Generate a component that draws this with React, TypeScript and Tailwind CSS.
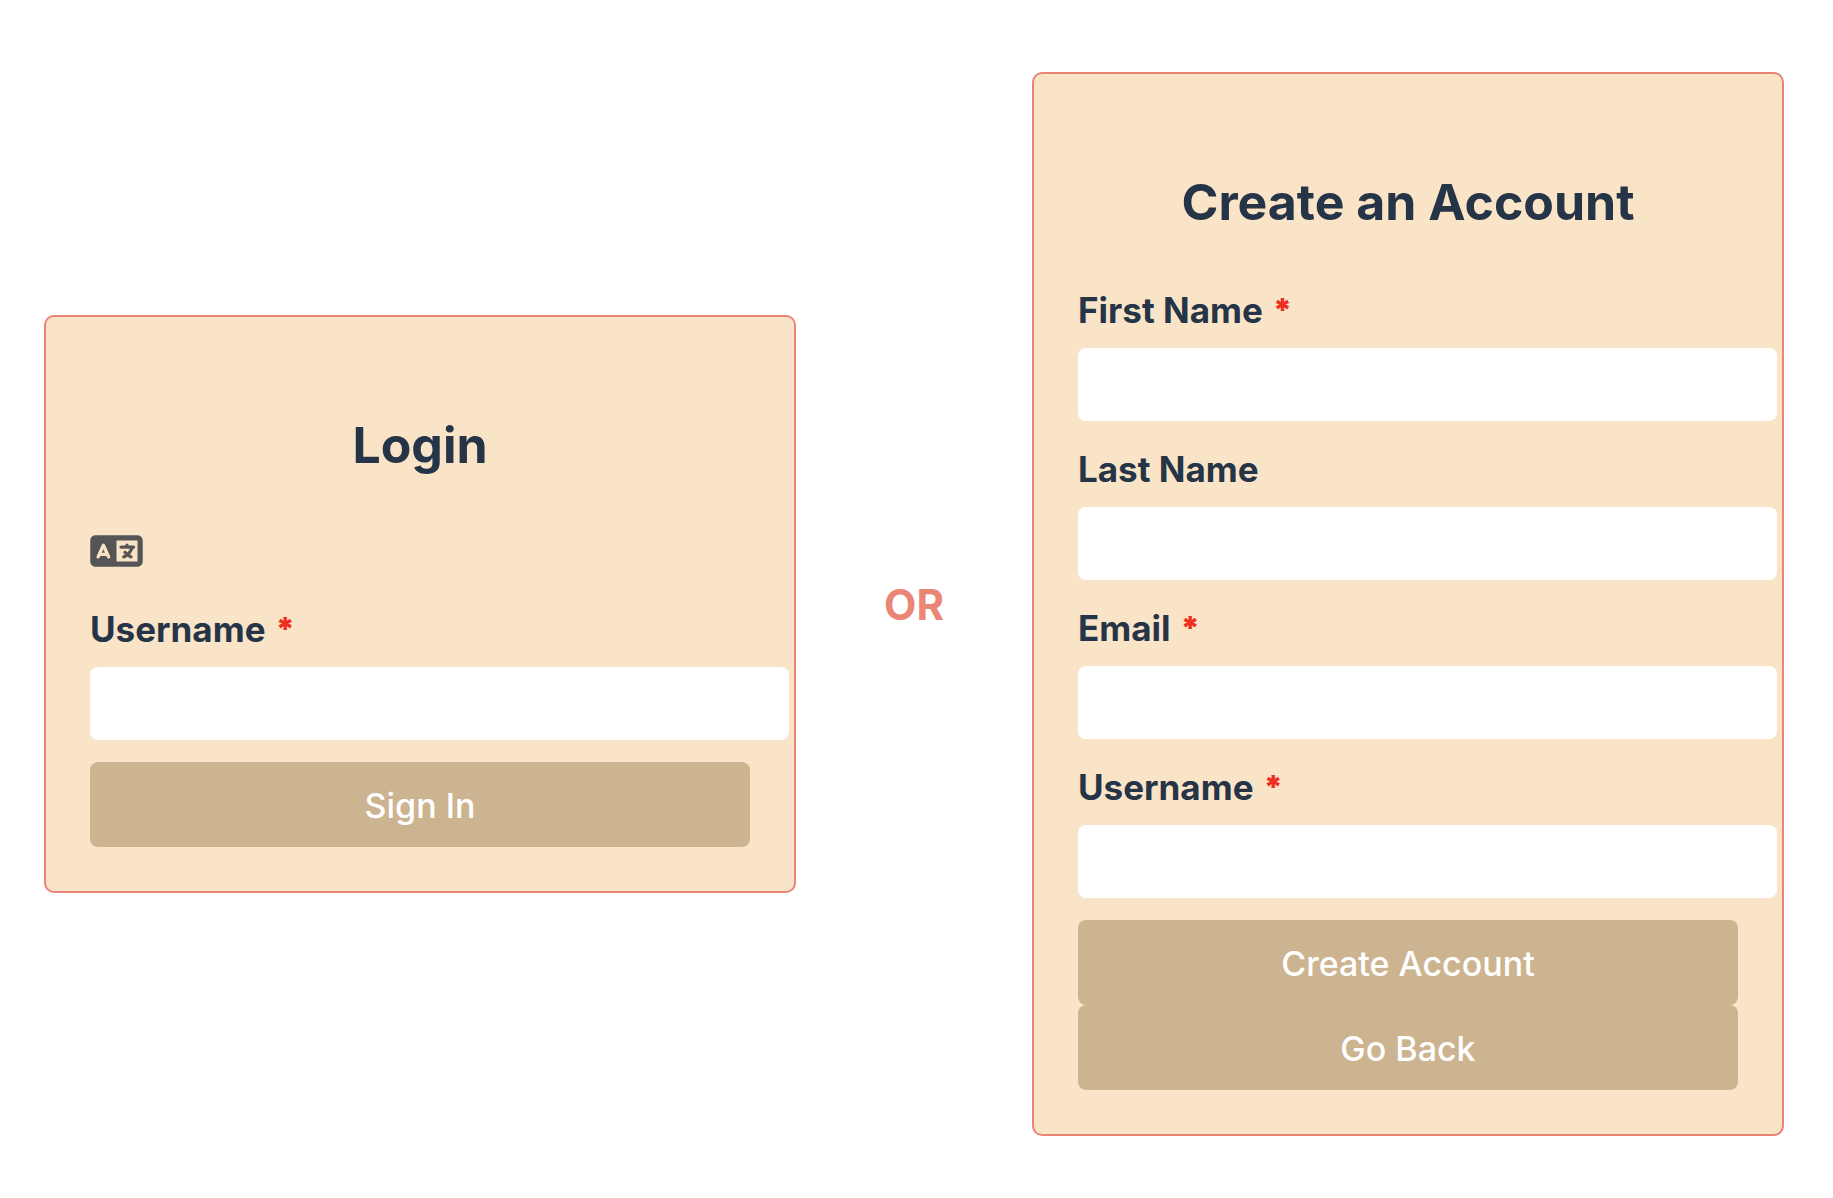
import type { ReactNode } from "react";
import { FaLanguage } from "react-icons/fa6";

function Card({ title, children }: { title: string; children: ReactNode }) {
  return (
    <form
      onSubmit={(event) => event.preventDefault()}
      className="min-w-0 flex-1 rounded-[10px] border-2 border-[#eb8576] bg-[#fae4c8] px-11 pt-[88px] pb-11"
    >
      <h2 className="text-center text-[50px] leading-[80px] font-bold">{title}</h2>
      {children}
    </form>
  );
}

function Field({ id, label, required = false }: { id: string; label: string; required?: boolean }) {
  return (
    <div className="mb-[22px]">
      <label htmlFor={id} className="mb-3 flex gap-[10px] text-[35px] leading-[52px] font-bold">
        {label}
        {required && <span className="text-[32px] leading-[52px] font-black text-[#ee2e1f]">*</span>}
      </label>
      <input
        id={id}
        type="text"
        required={required}
        className="block h-[73px] w-[calc(100%+39px)] rounded-lg bg-white px-5 text-[35px]"
      />
    </div>
  );
}

function ActionButton({ type = "button", children }: { type?: "button" | "submit"; children: ReactNode }) {
  return (
    <button
      type={type}
      className="block h-[85px] w-full rounded-lg bg-[#cdb491] pt-[2px] text-center text-[34px] leading-[52px] font-medium text-white"
    >
      {children}
    </button>
  );
}

export default function App() {
  return (
    <main className="flex min-h-screen items-center bg-white pt-[10px] pr-[49px] pl-11 font-['Inter',sans-serif] text-[#253446]">
      <Card title="Login">
        <button type="button" aria-label="Change language" className="mt-[45px] mb-[31px] block text-[#555555]">
          <FaLanguage className="h-[42px] w-[53px]" />
        </button>
        <Field id="login-username" label="Username" required />
        <ActionButton type="submit">Sign In</ActionButton>
      </Card>

      <p className="w-[236px] shrink-0 pt-[2px] text-center text-[42px] leading-[52px] font-bold text-[#eb8576]">OR</p>

      <Card title="Create an Account">
        <div className="mt-[42px]">
          <Field id="first-name" label="First Name" required />
          <Field id="last-name" label="Last Name" />
          <Field id="email" label="Email" required />
          <Field id="new-username" label="Username" required />
        </div>
        <ActionButton type="submit">Create Account</ActionButton>
        <ActionButton>Go Back</ActionButton>
      </Card>
    </main>
  );
}
